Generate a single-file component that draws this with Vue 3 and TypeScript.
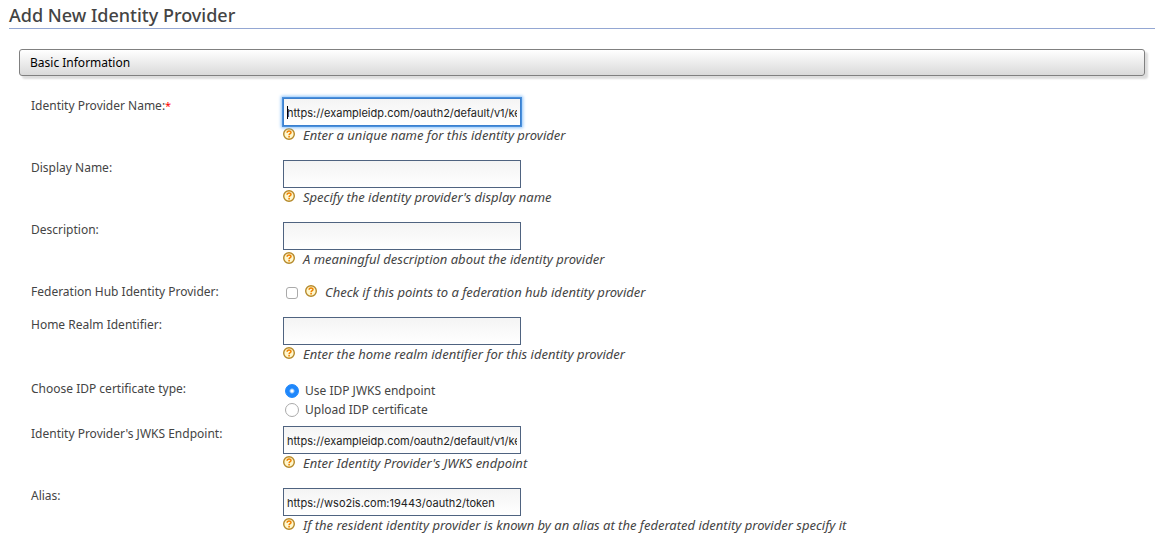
<script setup lang="ts">
import { ref } from 'vue'

interface TextField {
  kind: 'text'
  id: string
  label: string
  help: string
  value: string
  required?: boolean
  active?: boolean
}
interface CheckField {
  kind: 'check'
  id: string
  label: string
  help: string
}
interface RadioField {
  kind: 'radio'
  id: string
  label: string
  options: { value: string; text: string }[]
}
type Field = TextField | CheckField | RadioField

const fields = ref<Field[]>([
  { kind: 'text', id: 'idp-name', label: 'Identity Provider Name:', required: true, active: true, value: 'https://exampleidp.com/oauth2/default/v1/keys', help: 'Enter a unique name for this identity provider' },
  { kind: 'text', id: 'display-name', label: 'Display Name:', value: '', help: "Specify the identity provider's display name" },
  { kind: 'text', id: 'description', label: 'Description:', value: '', help: 'A meaningful description about the identity provider' },
  { kind: 'check', id: 'federation-hub', label: 'Federation Hub Identity Provider:', help: 'Check if this points to a federation hub identity provider' },
  { kind: 'text', id: 'home-realm', label: 'Home Realm Identifier:', value: '', help: 'Enter the home realm identifier for this identity provider' },
  {
    kind: 'radio',
    id: 'cert-type',
    label: 'Choose IDP certificate type:',
    options: [
      { value: 'jwks', text: 'Use IDP JWKS endpoint' },
      { value: 'upload', text: 'Upload IDP certificate' },
    ],
  },
  { kind: 'text', id: 'jwks', label: "Identity Provider's JWKS Endpoint:", value: 'https://exampleidp.com/oauth2/default/v1/keys', help: "Enter Identity Provider's JWKS endpoint" },
  { kind: 'text', id: 'alias', label: 'Alias:', value: 'https://wso2is.com:19443/oauth2/token', help: 'If the resident identity provider is known by an alias at the federated identity provider specify it' },
])

const federationHub = ref(false)
const certType = ref('jwks')
</script>

<template>
  <main class="page">
    <h1 class="title">Add New Identity Provider</h1>
    <section class="content">
      <h2 class="section-head">Basic Information</h2>
      <form class="form" @submit.prevent>
        <div v-for="field in fields" :key="field.id" class="row" :class="'row-' + field.kind">
          <span v-if="field.kind === 'radio'" :id="field.id" class="label">{{ field.label }}</span>
          <label v-else :for="field.id" class="label">{{ field.label }}<span v-if="field.kind === 'text' && field.required" class="required">*</span></label>

          <div v-if="field.kind === 'radio'" class="options" role="radiogroup" :aria-labelledby="field.id">
            <label v-for="option in field.options" :key="option.value" class="option">
              <input v-model="certType" class="radio" type="radio" name="cert-type" :value="option.value" />
              <span>{{ option.text }}</span>
            </label>
          </div>
          <div v-else class="control">
            <div v-if="field.kind === 'text'" class="input-wrap">
              <input :id="field.id" v-model="field.value" class="input" :class="{ active: field.active }" type="text" spellcheck="false" />
              <span v-if="field.active" class="caret"></span>
            </div>
            <input v-else :id="field.id" v-model="federationHub" class="checkbox" type="checkbox" />
            <div class="help">
              <svg class="help-icon" viewBox="0 0 12 12" aria-hidden="true">
                <circle cx="6" cy="6" r="5.3" fill="#fff8cf" stroke="#b5892a" stroke-width="1.4" />
                <path d="M4.1 4.8C4.1 2.5 8 2.5 8 4.6C8 5.8 6.1 5.7 6.1 7.2" fill="none" stroke="#f08000" stroke-width="1.5" />
                <rect x="5.3" y="8" width="1.6" height="1.5" fill="#f08000" />
              </svg>
              <span>{{ field.help }}</span>
            </div>
          </div>
        </div>
      </form>
    </section>
  </main>
</template>

<style>
body {
  margin: 0;
  background: #fff;
}
</style>

<style scoped>
.page {
  padding: 4px 1px 8px 9px;
  font-family: "Noto Sans", "Open Sans", sans-serif;
  font-size: 12px;
  line-height: 18px;
  color: #444;
}
.title {
  margin: 0;
  padding-bottom: 1px;
  border-bottom: 1px solid #94a7d3;
  font-size: 18px;
  font-weight: 500;
  line-height: 23px;
}
.content {
  padding: 20px 10px 0;
}
.section-head {
  margin: 0;
  padding: 0 10px;
  border: 1px solid #808080;
  border-radius: 3px;
  background: linear-gradient(#fff, #dadada);
  box-shadow: 3px 3px 2px #ddd;
  color: #000;
  font-size: 12px;
  font-weight: 400;
  line-height: 25px;
}
.form {
  padding: 17px 12px 0;
}
.row {
  display: grid;
  grid-template-columns: 252px 1fr;
  min-height: 62px;
}
.row-check {
  min-height: 33px;
}
.row-radio {
  min-height: 47px;
  padding-top: 2px;
  box-sizing: border-box;
}
.label {
  padding-top: 4px;
}
.required {
  color: #f00;
  font-size: 11px;
}
.control {
  padding-top: 5px;
}
.input-wrap {
  position: relative;
  width: 238px;
}
.input {
  display: block;
  width: 100%;
  height: 28px;
  box-sizing: border-box;
  margin: 0;
  padding: 3px 3px 1px;
  border: 1px solid #4f6380;
  border-radius: 0;
  outline: none;
  background: linear-gradient(#f4f4f4, #fff);
  color: #222;
  font-family: Inter, sans-serif;
  font-size: 11px;
}
.input.active {
  border-color: #3b80cf;
  box-shadow: 0 0 0 1px #4a90dc, 0 0 3px 2px #8fc4fa;
  caret-color: transparent;
}
.caret {
  position: absolute;
  top: 8px;
  left: 4px;
  width: 1px;
  height: 13px;
  background: #000;
}
.help {
  display: flex;
  align-items: flex-start;
  gap: 8px;
  font-size: 13px;
  font-style: italic;
}
.help-icon {
  flex: none;
  width: 12px;
  height: 12px;
  margin-top: 2px;
}
.row-check .control {
  display: flex;
  gap: 7px;
  padding: 4px 0 0 3px;
}
.checkbox {
  appearance: none;
  width: 12px;
  height: 12px;
  box-sizing: border-box;
  margin: 4px 0 0;
  border: 1px solid #aaa;
  border-radius: 3px;
  background: #fff;
}
.options {
  padding: 5px 0 0 2px;
}
.option {
  display: flex;
  align-items: center;
  gap: 6px;
  height: 19px;
}
.radio {
  appearance: none;
  width: 14px;
  height: 14px;
  box-sizing: border-box;
  margin: 0;
  border: 1px solid #aaa;
  border-radius: 50%;
  background: #fff;
}
.radio:checked {
  border-color: #1f87fb;
  background: radial-gradient(circle, #fff 1px, #1f87fb 3px);
}
.checkbox:checked {
  border-color: #1f87fb;
  background: #1f87fb;
}
</style>
